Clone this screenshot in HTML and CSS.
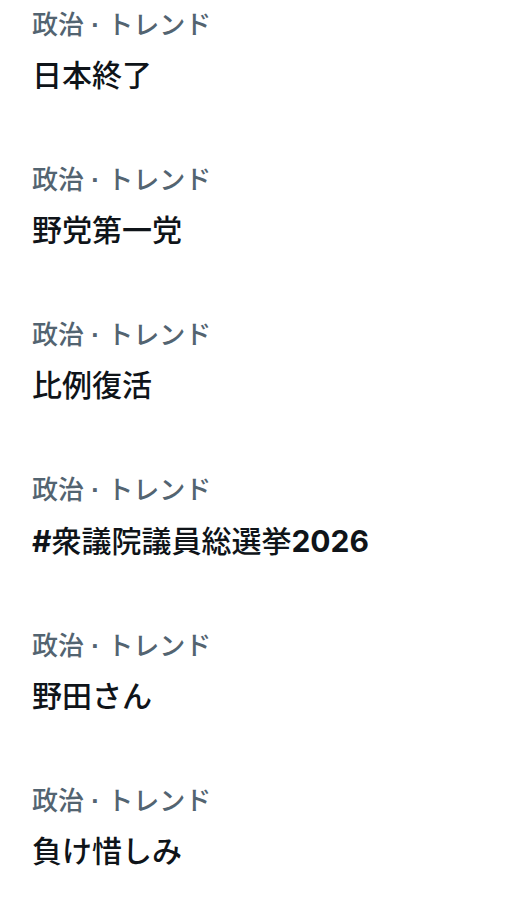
FILE: index.html
```html
<!DOCTYPE html>
<html lang="ja">
<head>
<meta charset="utf-8">
<link rel="stylesheet" href="styles.css">
</head>
<body>
<div class="list">
  <div class="item"><div class="cat">政治<span class="dot"> · </span>トレンド</div><div class="title">日本終了</div></div>
  <div class="item"><div class="cat">政治<span class="dot"> · </span>トレンド</div><div class="title">野党第一党</div></div>
  <div class="item"><div class="cat">政治<span class="dot"> · </span>トレンド</div><div class="title">比例復活</div></div>
  <div class="item"><div class="cat">政治<span class="dot"> · </span>トレンド</div><div class="title"><span class="latin">#</span>衆議院議員総選挙<span class="latin">2026</span></div></div>
  <div class="item"><div class="cat">政治<span class="dot"> · </span>トレンド</div><div class="title">野田さん</div></div>
  <div class="item"><div class="cat">政治<span class="dot"> · </span>トレンド</div><div class="title">負け惜しみ</div></div>
</div>
</body>
</html>
```
FILE: styles.css
```css
html, body { margin: 0; padding: 0; background: #ffffff; }
body { font-family: "Liberation Sans", "Noto Sans CJK JP", sans-serif; }
.list { padding-top: 9px; }
.item { padding: 0 32px 68px 32px; }
.cat { font-size: 26px; line-height: 32px; color: #536471; font-weight: 500; }
.dot { font-weight: 700; }
.title { margin-top: 15px; font-size: 30px; line-height: 40px; color: #0f1419; font-weight: 500; }
.latin { font-family: "Inter", "Liberation Sans", sans-serif; font-weight: 700; }
```
